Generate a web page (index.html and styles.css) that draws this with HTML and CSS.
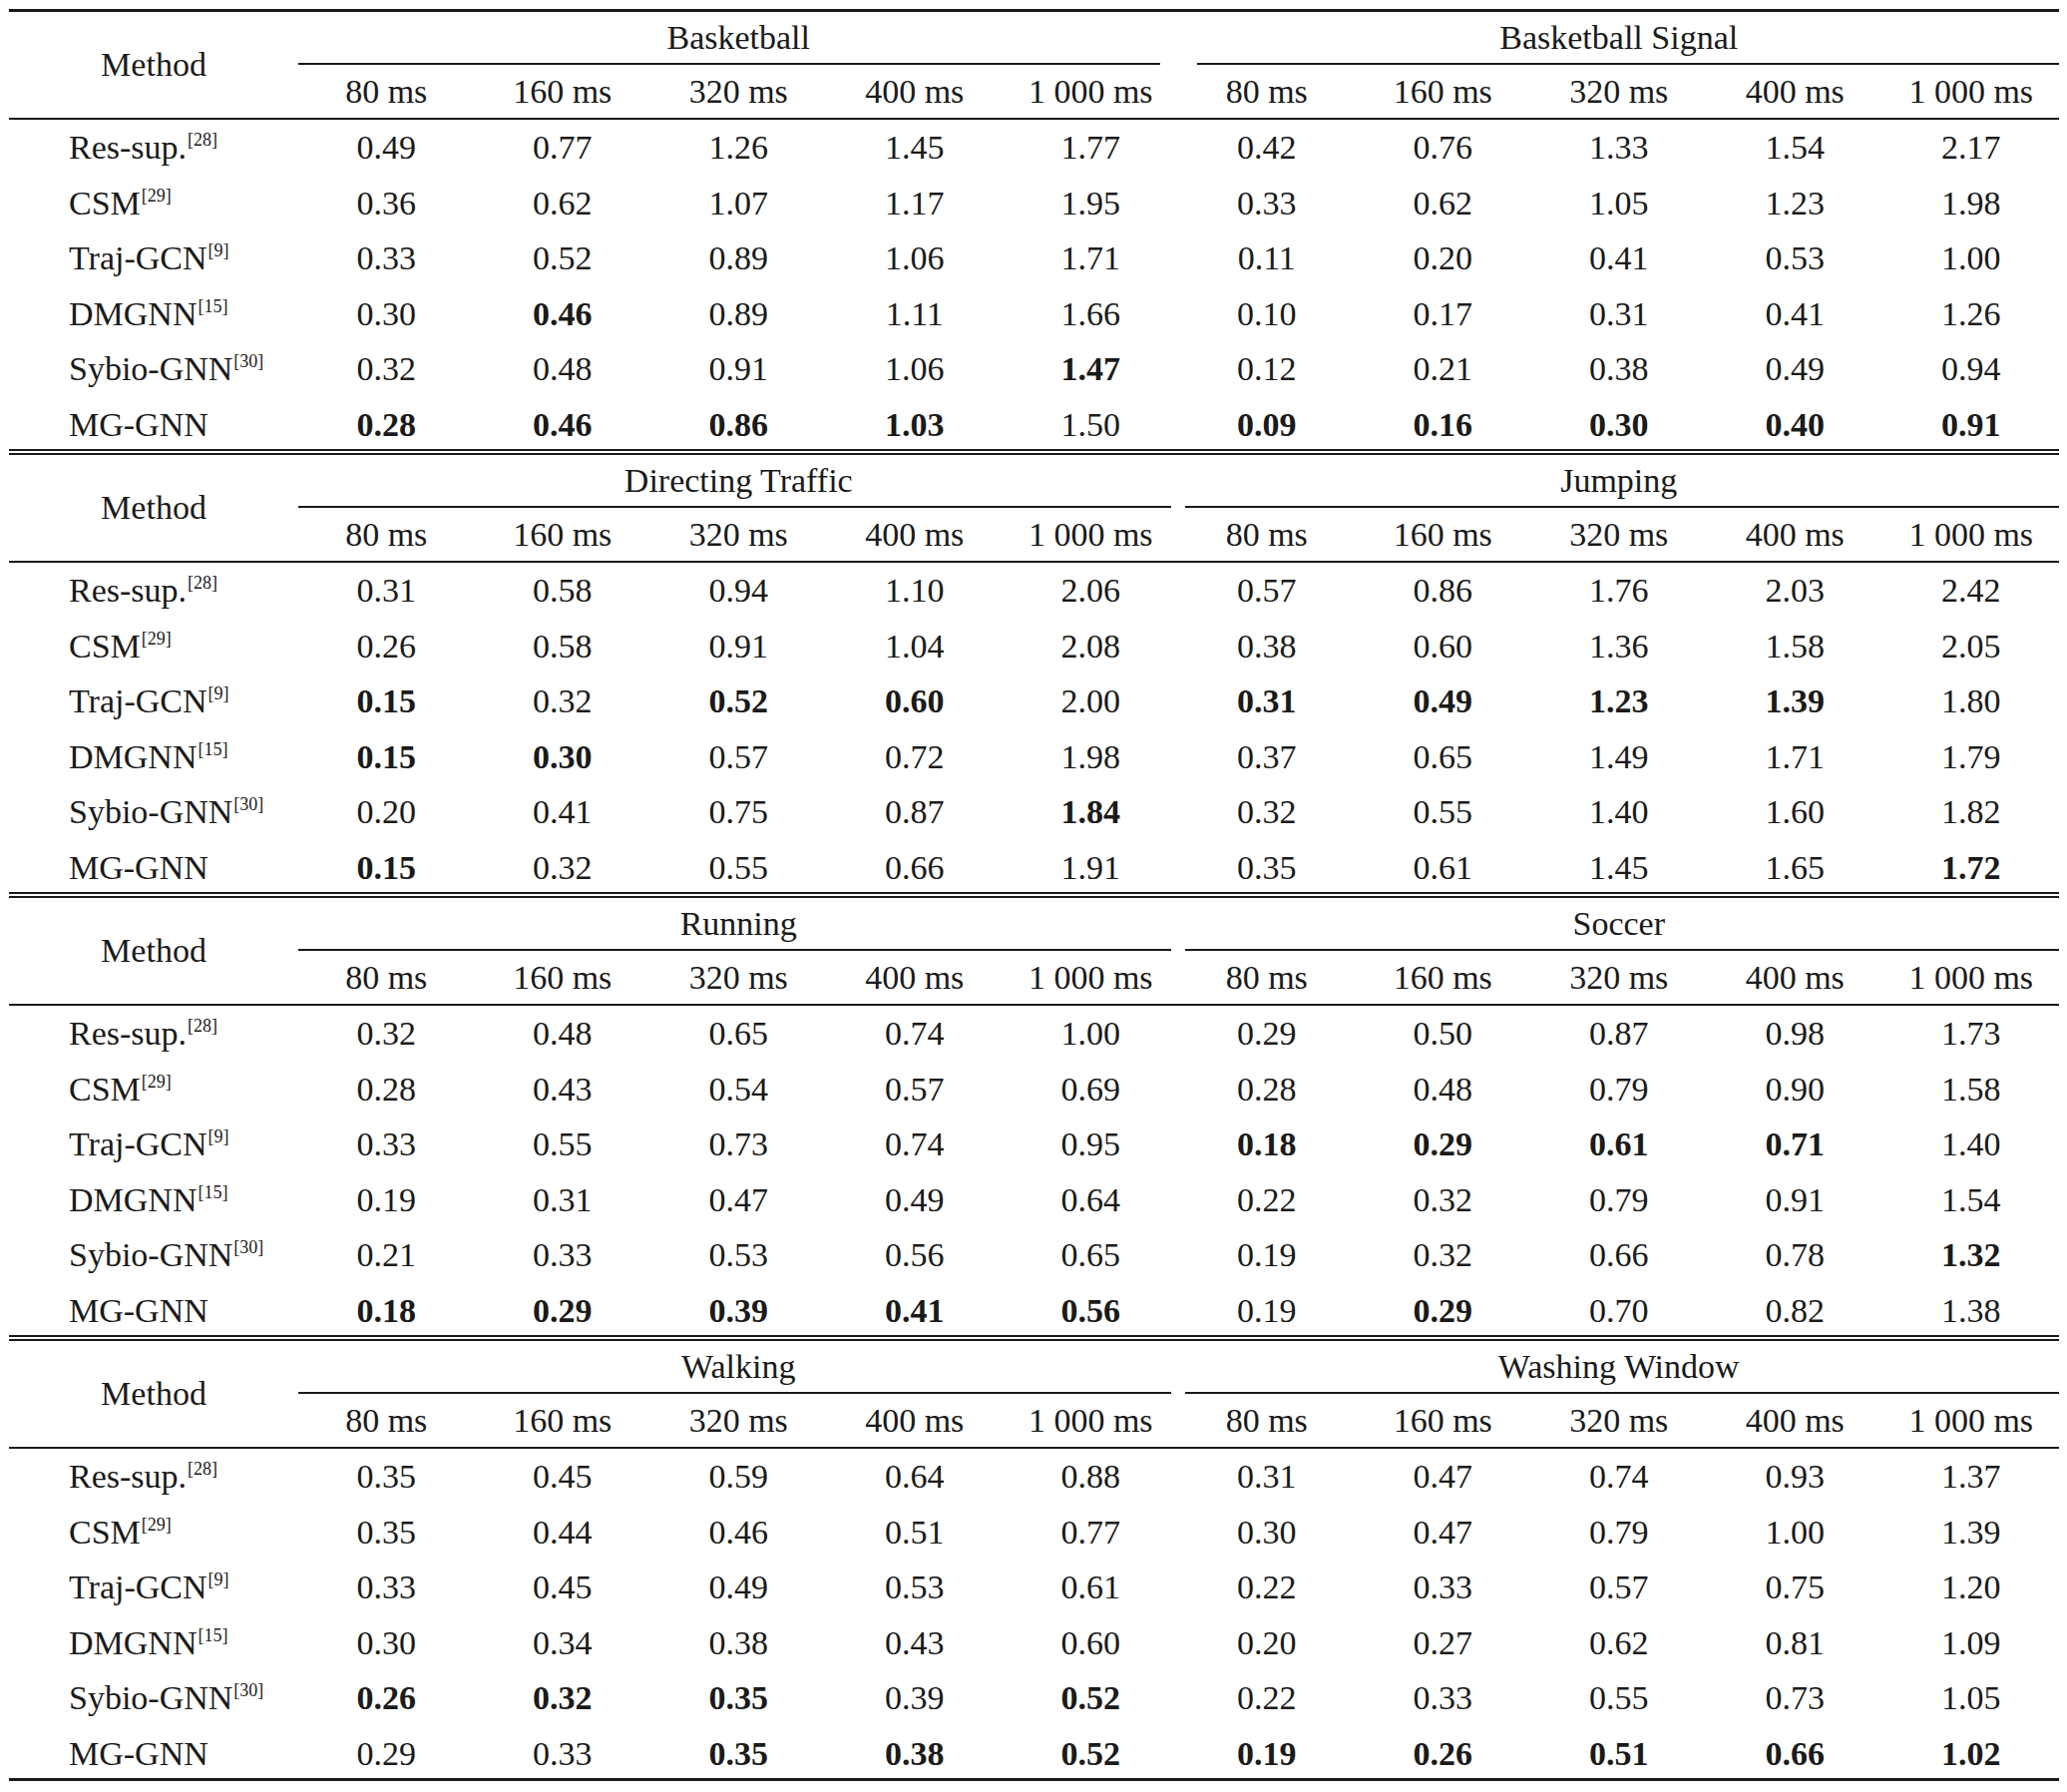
FILE: index.html
```html
<!DOCTYPE html>
<html>
<head>
<meta charset="utf-8">
<link rel="stylesheet" href="styles.css">
</head>
<body>
<div class="table">

<div class="section first">
  <div class="head">
    <div class="method">Method</div>
    <div class="gt g1">Basketball</div>
    <div class="gt g2">Basketball Signal</div>
    <div class="rule r1 wide"></div>
    <div class="rule r2 wide"></div>
    <span class="sub">80 ms</span><span class="sub">160 ms</span><span class="sub">320 ms</span><span class="sub">400 ms</span><span class="sub">1 000 ms</span>
    <span class="sub">80 ms</span><span class="sub">160 ms</span><span class="sub">320 ms</span><span class="sub">400 ms</span><span class="sub">1 000 ms</span>
  </div>
  <div class="row"><span class="m">Res-sup.<sup>[28]</sup></span><span>0.49</span><span>0.77</span><span>1.26</span><span>1.45</span><span>1.77</span><span>0.42</span><span>0.76</span><span>1.33</span><span>1.54</span><span>2.17</span></div>
  <div class="row"><span class="m">CSM<sup>[29]</sup></span><span>0.36</span><span>0.62</span><span>1.07</span><span>1.17</span><span>1.95</span><span>0.33</span><span>0.62</span><span>1.05</span><span>1.23</span><span>1.98</span></div>
  <div class="row"><span class="m">Traj-GCN<sup>[9]</sup></span><span>0.33</span><span>0.52</span><span>0.89</span><span>1.06</span><span>1.71</span><span>0.11</span><span>0.20</span><span>0.41</span><span>0.53</span><span>1.00</span></div>
  <div class="row"><span class="m">DMGNN<sup>[15]</sup></span><span>0.30</span><span class="b">0.46</span><span>0.89</span><span>1.11</span><span>1.66</span><span>0.10</span><span>0.17</span><span>0.31</span><span>0.41</span><span>1.26</span></div>
  <div class="row"><span class="m">Sybio-GNN<sup>[30]</sup></span><span>0.32</span><span>0.48</span><span>0.91</span><span>1.06</span><span class="b">1.47</span><span>0.12</span><span>0.21</span><span>0.38</span><span>0.49</span><span>0.94</span></div>
  <div class="row last"><span class="m">MG-GNN</span><span class="b">0.28</span><span class="b">0.46</span><span class="b">0.86</span><span class="b">1.03</span><span>1.50</span><span class="b">0.09</span><span class="b">0.16</span><span class="b">0.30</span><span class="b">0.40</span><span class="b">0.91</span></div>
</div>

<div class="section">
  <div class="head">
    <div class="method">Method</div>
    <div class="gt g1">Directing Traffic</div>
    <div class="gt g2">Jumping</div>
    <div class="rule r1"></div>
    <div class="rule r2"></div>
    <span class="sub">80 ms</span><span class="sub">160 ms</span><span class="sub">320 ms</span><span class="sub">400 ms</span><span class="sub">1 000 ms</span>
    <span class="sub">80 ms</span><span class="sub">160 ms</span><span class="sub">320 ms</span><span class="sub">400 ms</span><span class="sub">1 000 ms</span>
  </div>
  <div class="row"><span class="m">Res-sup.<sup>[28]</sup></span><span>0.31</span><span>0.58</span><span>0.94</span><span>1.10</span><span>2.06</span><span>0.57</span><span>0.86</span><span>1.76</span><span>2.03</span><span>2.42</span></div>
  <div class="row"><span class="m">CSM<sup>[29]</sup></span><span>0.26</span><span>0.58</span><span>0.91</span><span>1.04</span><span>2.08</span><span>0.38</span><span>0.60</span><span>1.36</span><span>1.58</span><span>2.05</span></div>
  <div class="row"><span class="m">Traj-GCN<sup>[9]</sup></span><span class="b">0.15</span><span>0.32</span><span class="b">0.52</span><span class="b">0.60</span><span>2.00</span><span class="b">0.31</span><span class="b">0.49</span><span class="b">1.23</span><span class="b">1.39</span><span>1.80</span></div>
  <div class="row"><span class="m">DMGNN<sup>[15]</sup></span><span class="b">0.15</span><span class="b">0.30</span><span>0.57</span><span>0.72</span><span>1.98</span><span>0.37</span><span>0.65</span><span>1.49</span><span>1.71</span><span>1.79</span></div>
  <div class="row"><span class="m">Sybio-GNN<sup>[30]</sup></span><span>0.20</span><span>0.41</span><span>0.75</span><span>0.87</span><span class="b">1.84</span><span>0.32</span><span>0.55</span><span>1.40</span><span>1.60</span><span>1.82</span></div>
  <div class="row last"><span class="m">MG-GNN</span><span class="b">0.15</span><span>0.32</span><span>0.55</span><span>0.66</span><span>1.91</span><span>0.35</span><span>0.61</span><span>1.45</span><span>1.65</span><span class="b">1.72</span></div>
</div>

<div class="section">
  <div class="head">
    <div class="method">Method</div>
    <div class="gt g1">Running</div>
    <div class="gt g2">Soccer</div>
    <div class="rule r1"></div>
    <div class="rule r2"></div>
    <span class="sub">80 ms</span><span class="sub">160 ms</span><span class="sub">320 ms</span><span class="sub">400 ms</span><span class="sub">1 000 ms</span>
    <span class="sub">80 ms</span><span class="sub">160 ms</span><span class="sub">320 ms</span><span class="sub">400 ms</span><span class="sub">1 000 ms</span>
  </div>
  <div class="row"><span class="m">Res-sup.<sup>[28]</sup></span><span>0.32</span><span>0.48</span><span>0.65</span><span>0.74</span><span>1.00</span><span>0.29</span><span>0.50</span><span>0.87</span><span>0.98</span><span>1.73</span></div>
  <div class="row"><span class="m">CSM<sup>[29]</sup></span><span>0.28</span><span>0.43</span><span>0.54</span><span>0.57</span><span>0.69</span><span>0.28</span><span>0.48</span><span>0.79</span><span>0.90</span><span>1.58</span></div>
  <div class="row"><span class="m">Traj-GCN<sup>[9]</sup></span><span>0.33</span><span>0.55</span><span>0.73</span><span>0.74</span><span>0.95</span><span class="b">0.18</span><span class="b">0.29</span><span class="b">0.61</span><span class="b">0.71</span><span>1.40</span></div>
  <div class="row"><span class="m">DMGNN<sup>[15]</sup></span><span>0.19</span><span>0.31</span><span>0.47</span><span>0.49</span><span>0.64</span><span>0.22</span><span>0.32</span><span>0.79</span><span>0.91</span><span>1.54</span></div>
  <div class="row"><span class="m">Sybio-GNN<sup>[30]</sup></span><span>0.21</span><span>0.33</span><span>0.53</span><span>0.56</span><span>0.65</span><span>0.19</span><span>0.32</span><span>0.66</span><span>0.78</span><span class="b">1.32</span></div>
  <div class="row last"><span class="m">MG-GNN</span><span class="b">0.18</span><span class="b">0.29</span><span class="b">0.39</span><span class="b">0.41</span><span class="b">0.56</span><span>0.19</span><span class="b">0.29</span><span>0.70</span><span>0.82</span><span>1.38</span></div>
</div>

<div class="section lastsec">
  <div class="head">
    <div class="method">Method</div>
    <div class="gt g1">Walking</div>
    <div class="gt g2">Washing Window</div>
    <div class="rule r1"></div>
    <div class="rule r2"></div>
    <span class="sub">80 ms</span><span class="sub">160 ms</span><span class="sub">320 ms</span><span class="sub">400 ms</span><span class="sub">1 000 ms</span>
    <span class="sub">80 ms</span><span class="sub">160 ms</span><span class="sub">320 ms</span><span class="sub">400 ms</span><span class="sub">1 000 ms</span>
  </div>
  <div class="row"><span class="m">Res-sup.<sup>[28]</sup></span><span>0.35</span><span>0.45</span><span>0.59</span><span>0.64</span><span>0.88</span><span>0.31</span><span>0.47</span><span>0.74</span><span>0.93</span><span>1.37</span></div>
  <div class="row"><span class="m">CSM<sup>[29]</sup></span><span>0.35</span><span>0.44</span><span>0.46</span><span>0.51</span><span>0.77</span><span>0.30</span><span>0.47</span><span>0.79</span><span>1.00</span><span>1.39</span></div>
  <div class="row"><span class="m">Traj-GCN<sup>[9]</sup></span><span>0.33</span><span>0.45</span><span>0.49</span><span>0.53</span><span>0.61</span><span>0.22</span><span>0.33</span><span>0.57</span><span>0.75</span><span>1.20</span></div>
  <div class="row"><span class="m">DMGNN<sup>[15]</sup></span><span>0.30</span><span>0.34</span><span>0.38</span><span>0.43</span><span>0.60</span><span>0.20</span><span>0.27</span><span>0.62</span><span>0.81</span><span>1.09</span></div>
  <div class="row"><span class="m">Sybio-GNN<sup>[30]</sup></span><span class="b">0.26</span><span class="b">0.32</span><span class="b">0.35</span><span>0.39</span><span class="b">0.52</span><span>0.22</span><span>0.33</span><span>0.55</span><span>0.73</span><span>1.05</span></div>
  <div class="row last"><span class="m">MG-GNN</span><span>0.29</span><span>0.33</span><span class="b">0.35</span><span class="b">0.38</span><span class="b">0.52</span><span class="b">0.19</span><span class="b">0.26</span><span class="b">0.51</span><span class="b">0.66</span><span class="b">1.02</span></div>
</div>

</div>
</body>
</html>
```

FILE: styles.css
```css
html, body {
  margin: 0;
  padding: 0;
  background: #ffffff;
}

.table {
  margin: 9px 0 0 9px;
  width: 2055px;
  font-family: "Liberation Serif", "Times New Roman", serif;
  font-size: 34px;
  color: #1a1a1a;
}

.section {
  border-top: 6px double #1a1a1a;
}

.section.first {
  border-top: 3px solid #1a1a1a;
}

.section.lastsec {
  border-bottom: 3px solid #1a1a1a;
}

.head {
  display: grid;
  grid-template-columns: 290px repeat(10, 1fr);
  grid-template-rows: 51px 2px 53px;
  border-bottom: 2px solid #1a1a1a;
}

.method {
  grid-row: 1 / 4;
  grid-column: 1;
  display: flex;
  align-items: center;
  justify-content: center;
}

.gt {
  grid-row: 1;
  display: flex;
  align-items: center;
  justify-content: center;
  line-height: 1;
}

.g1 { grid-column: 2 / 7; }
.g2 { grid-column: 7 / 12; }

.rule {
  grid-row: 2;
  background: #1a1a1a;
}

.r1 { grid-column: 2 / 7; margin-right: 8px; }
.r2 { grid-column: 7 / 12; margin-left: 6px; }
.r1.wide { margin-right: 19px; }
.r2.wide { margin-left: 18px; }

.sub {
  grid-row: 3;
  text-align: center;
  line-height: 53px;
  white-space: nowrap;
}

.row {
  display: grid;
  grid-template-columns: 290px repeat(10, 1fr);
  height: 55.5px;
  line-height: 55.5px;
  text-align: center;
  white-space: nowrap;
}

.row.last {
  height: 52.5px;
}

.row .m {
  text-align: left;
  padding-left: 60px;
}

.b {
  font-weight: bold;
}

sup {
  font-size: 18px;
  line-height: 0;
  vertical-align: 13px;
  margin-left: 1px;
}
```
